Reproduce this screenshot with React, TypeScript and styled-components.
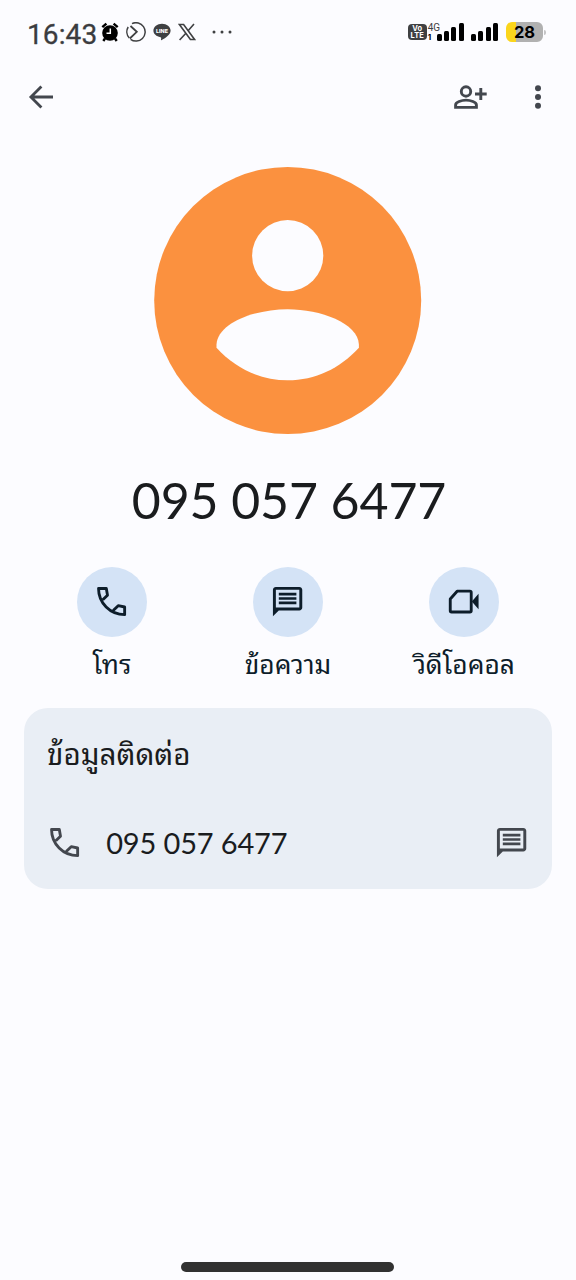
import React from 'react';
import styled, { createGlobalStyle } from 'styled-components';

const GlobalStyle = createGlobalStyle`
  *, *::before, *::after { box-sizing: border-box; }
  body { margin: 0; background: #fcfcff; }
  svg { display: block; flex: none; }
`;

const Screen = styled.div`
  display: flex;
  flex-direction: column;
  width: 576px;
  height: 1280px;
  overflow: hidden;
  background: #fcfcff;
  color: #1a1c1e;
  font-family: Lato, 'Noto Sans Thai Looped', Loma, Waree, Garuda, 'Noto Sans', sans-serif;
`;

const StatusBar = styled.header`
  display: flex;
  justify-content: space-between;
  align-items: center;
  height: 64px;
  padding: 0 31px 0 27px;
`;

const StatusGroup = styled.div`
  display: flex;
  align-items: center;
`;

const NotificationIcons = styled.div`
  display: flex;
  align-items: center;
  gap: 7.3px;
`;

const Overflow = styled.span`
  padding-left: 8px;
`;

const Clock = styled.span`
  width: 73.5px;
  padding-top: 5px;
  font: 400 28px/32px Roboto, sans-serif;
  letter-spacing: 0.1px;
  color: #3b3c3f;
  -webkit-text-stroke: 0.3px #3b3c3f;
  white-space: nowrap;
`;

const VolteBadge = styled.div`
  width: 19px;
  height: 16px;
  padding-top: 1px;
  border-radius: 4px;
  background: #3f4042;
  color: #fff;
  font: 700 7.5px/7px Inter, sans-serif;
  text-align: center;
`;

const NetworkLabel = styled.div`
  display: flex;
  flex-direction: column;
  width: 9px;
  margin: -1px 0 0 1px;
  font: 400 10px/10px Roboto, sans-serif;
  color: #3f4042;
  white-space: nowrap;
  b { font: 700 8px/8px Inter, sans-serif; color: #000; }
`;

const Bars = styled.div<{ $left: number }>`
  display: flex;
  align-items: flex-end;
  gap: 2.4px;
  height: 18px;
  margin-left: ${(p) => p.$left}px;
`;

const Bar = styled.i<{ $h: number }>`
  width: 5px;
  height: ${(p) => p.$h}px;
  border-radius: 1.5px;
  background: #000;
`;

const Battery = styled.div`
  display: flex;
  align-items: center;
  justify-content: center;
  width: 37px;
  height: 20px;
  margin-left: 8px;
  border-radius: 6px;
  background: linear-gradient(90deg, #fbd51c 0 10px, #b1b1b1 10px);
  font: 700 16.5px/20px Inter, sans-serif;
  color: #000;
`;

const BatteryTip = styled.i`
  width: 2px;
  height: 5px;
  margin: 0 -1px 0 1px;
  border-radius: 0 2px 2px 0;
  background: #c4c4c6;
`;

const AppBar = styled.nav`
  display: flex;
  justify-content: space-between;
  align-items: center;
  height: 65px;
  padding: 0 32px 0 27px;
  color: #43474e;
`;

const AppBarActions = styled.div`
  display: flex;
  align-items: center;
  gap: 44px;
`;

const Profile = styled.section`
  display: flex;
  flex-direction: column;
  align-items: center;
  padding-top: 37.5px;
`;

const PhoneTitle = styled.h1`
  margin: 35px 0 0;
  padding-left: 2px;
  font-size: 50px;
  font-weight: 400;
  line-height: 60px;
  letter-spacing: -0.1px;
  white-space: nowrap;
`;

const Actions = styled.section`
  display: grid;
  grid-template-columns: repeat(3, 176px);
  justify-content: center;
  margin-top: 37.5px;
`;

const Action = styled.div`
  display: flex;
  flex-direction: column;
  align-items: center;
  color: #0d1d2a;
`;

const ActionCircle = styled.div`
  display: grid;
  place-items: center;
  width: 70px;
  height: 70px;
  border-radius: 50%;
  background: #d4e3f6;
`;

const ActionLabel = styled.span`
  margin-top: 7px;
  font-size: 26.3px;
  line-height: 40px;
  white-space: nowrap;
`;

const Card = styled.section`
  height: 181px;
  margin: 24px 24px 0;
  padding: 24px 23px 0;
  border-radius: 24px;
  background: #e9eef5;
`;

const CardTitle = styled.h2`
  margin: 0;
  font-size: 29.6px;
  font-weight: 400;
  line-height: 44px;
  white-space: nowrap;
`;

const NumberRow = styled.div`
  display: flex;
  align-items: center;
  height: 36px;
  margin-top: 49px;
  color: #43474e;
`;

const Number = styled.span`
  flex: 1;
  margin-left: 24px;
  font-size: 29px;
  line-height: 36px;
  letter-spacing: -0.15px;
  color: #1a1c1e;
  white-space: nowrap;
`;

const HomeArea = styled.footer`
  display: flex;
  justify-content: center;
  margin-top: auto;
  padding: 0 1px 8px 0;
`;

const HomeHandle = styled.div`
  width: 213px;
  height: 10px;
  border-radius: 5px;
  background: #313131;
`;

const PhoneIcon = () => (
  <svg width="35.2" height="35.2" viewBox="0 0 24 24" fill="none" stroke="currentColor" strokeWidth="1.95" strokeLinejoin="round">
    <path d="M6 10.8 9.2 7.6 8.4 3.1H3.1C3.1 13 11 20.9 20.9 20.9V15.7L16.5 14.8 13.1 18.1" />
  </svg>
);

const MessageIcon = () => (
  <svg width="35.2" height="35.2" viewBox="0 0 24 24" fill="currentColor">
    <path d="M4 4h16v12H4V4m0-2c-1.1 0-2 .9-2 2v18l4-4h14c1.1 0 2-.9 2-2V4c0-1.1-.9-2-2-2H4zm2 10h12v1.8H6V12zm0-3h12v1.8H6V9zm0-3h12v1.8H6V6z" />
  </svg>
);

const VideoIcon = () => (
  <svg width="35.2" height="35.2" viewBox="0 0 24 24">
    <path d="M7.6 4.9H16.3Q17.2 4.9 17.2 5.8V18.2Q17.2 19.1 16.3 19.1H3.8Q2.9 19.1 2.9 18.2V10.2Z" fill="none" stroke="currentColor" strokeWidth="1.95" strokeLinejoin="round" />
    <path d="M17.6 12 22.2 6.7V17.3Z" fill="currentColor" />
  </svg>
);

const BackIcon = () => (
  <svg width="28" height="28" viewBox="0 0 28 28" fill="none" stroke="currentColor" strokeWidth="2.8">
    <path d="M26 14H4.2M14.4 3.4 3.9 14 14.4 24.6" />
  </svg>
);

const PersonAddIcon = () => (
  <svg width="35" height="26" viewBox="0 0 35 26" fill="none" stroke="currentColor" strokeWidth="2.9">
    <circle cx="13" cy="7.5" r="4.7" />
    <path d="M2.6 23.4V20.9C2.6 18.2 8.4 16.1 13 16.1S23.4 18.2 23.4 20.9V23.4Z" />
    <path d="M22 10H33.7M27.8 4.1V15.9" />
  </svg>
);

const MoreIcon = () => (
  <svg width="12" height="26" viewBox="0 0 12 26" fill="currentColor">
    <circle cx="6" cy="4.2" r="3" />
    <circle cx="6" cy="13" r="3" />
    <circle cx="6" cy="21.8" r="3" />
  </svg>
);

const Avatar = () => (
  <svg width="268" height="268" viewBox="0 0 268 268">
    <circle cx="133.7" cy="133.5" r="133.5" fill="#fb913f" />
    <g fill="#fcfcff">
      <circle cx="133.7" cy="88.7" r="35.6" />
      <path d="M62.5 180.7V177.5C63.5 156 101 142.2 133.7 142.2S204 156 204.9 177.5V180.7C186 201.5 161 213.3 133.7 213.3S81.5 201.5 62.5 180.7Z" />
    </g>
  </svg>
);

const AlarmIcon = () => (
  <svg width="18" height="20" viewBox="0 0 18 20">
    <circle cx="9" cy="11" r="7.8" fill="#000" />
    <path d="M1.3 5.2 5.4 1.7M16.7 5.2 12.6 1.7M4 16.5 2.3 19M14 16.5 15.7 19" stroke="#000" strokeWidth="2.4" />
    <path d="M9.3 6.5V11.3H5.5" fill="none" stroke="#fff" strokeWidth="1.5" />
  </svg>
);

const DialIcon = () => (
  <svg width="20" height="20" viewBox="0 0 20 20" fill="none" stroke="#3f4042" strokeWidth="1.5">
    <path d="M6 1.6A9.2 9.2 0 1 1 4.6 17.4M3.3 16A9.2 9.2 0 0 1 2.2 5" />
    <path d="M4.5 4 10.8 9.8 3.8 16.5" strokeWidth="1.8" />
  </svg>
);

const LineIcon = () => (
  <svg width="18" height="18" viewBox="0 0 18 18">
    <path d="M9 .8C4.2.8.4 3.8.4 7.6c0 3.4 3 6 7.1 6.7.9.2.7 1 .5 2.5 0 .5.3.6.8.3 3-1.7 8.8-5 8.8-9.5C17.6 3.8 13.8.8 9 .8Z" fill="#3f4042" />
    <text x="9" y="9.7" textAnchor="middle" fontFamily="Inter, sans-serif" fontWeight="800" fontSize="5.4" fill="#fff">LINE</text>
  </svg>
);

const XIcon = () => (
  <svg width="18" height="18" viewBox="0 0 18 18" fill="none" stroke="#3f4042" strokeWidth="1.6">
    <path d="M1.4 1.5H5.6L16.6 16.5H12.4Z" />
    <path d="M16 1 10.1 7.7M7.9 10.2 1.6 17" />
  </svg>
);

const DotsIcon = () => (
  <svg width="20" height="4" viewBox="0 0 20 4" fill="#3f4042">
    <circle cx="2" cy="2" r="1.5" />
    <circle cx="10" cy="2" r="1.5" />
    <circle cx="18" cy="2" r="1.5" />
  </svg>
);

const Signal = ({ left }: { left: number }) => (
  <Bars $left={left}>
    {[7, 10.5, 14, 18].map((h) => (
      <Bar key={h} $h={h} />
    ))}
  </Bars>
);

const actions = [
  { label: 'โทร', icon: <PhoneIcon /> },
  { label: 'ข้อความ', icon: <MessageIcon /> },
  { label: 'วิดีโอคอล', icon: <VideoIcon /> },
];

export default function App() {
  return (
    <>
      <GlobalStyle />
      <Screen>
        <StatusBar>
          <StatusGroup>
            <Clock>16:43</Clock>
            <NotificationIcons>
              <AlarmIcon />
              <DialIcon />
              <LineIcon />
              <XIcon />
              <Overflow><DotsIcon /></Overflow>
            </NotificationIcons>
          </StatusGroup>
          <StatusGroup>
            <VolteBadge>Vo<br />LTE</VolteBadge>
            <NetworkLabel>4G<b>1</b></NetworkLabel>
            <Signal left={0} />
            <Signal left={7} />
            <Battery>28</Battery>
            <BatteryTip />
          </StatusGroup>
        </StatusBar>
        <AppBar>
          <BackIcon />
          <AppBarActions>
            <PersonAddIcon />
            <MoreIcon />
          </AppBarActions>
        </AppBar>
        <Profile>
          <Avatar />
          <PhoneTitle>095 057 6477</PhoneTitle>
        </Profile>
        <Actions>
          {actions.map((a) => (
            <Action key={a.label}>
              <ActionCircle>{a.icon}</ActionCircle>
              <ActionLabel>{a.label}</ActionLabel>
            </Action>
          ))}
        </Actions>
        <Card>
          <CardTitle>ข้อมูลติดต่อ</CardTitle>
          <NumberRow>
            <PhoneIcon />
            <Number>095 057 6477</Number>
            <MessageIcon />
          </NumberRow>
        </Card>
        <HomeArea>
          <HomeHandle />
        </HomeArea>
      </Screen>
    </>
  );
}
